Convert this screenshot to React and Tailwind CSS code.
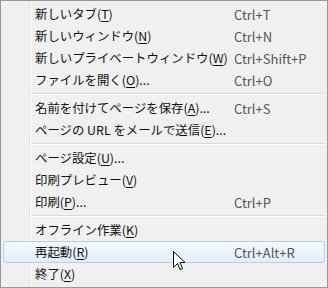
import React from "react";

const groups = [
  [
    { pre: "新しいタブ(", key: "T", post: ")", sc: "Ctrl+T" },
    { pre: "新しいウィンドウ(", key: "N", post: ")", sc: "Ctrl+N" },
    { pre: "新しいプライベートウィンドウ(", key: "W", post: ")", sc: "Ctrl+Shift+P" },
    { pre: "ファイルを開く(", key: "O", post: ")...", sc: "Ctrl+O" },
  ],
  [
    { pre: "名前を付けてページを保存(", key: "A", post: ")...", sc: "Ctrl+S" },
    { pre: "ページの URL をメールで送信(", key: "E", post: ")..." },
  ],
  [
    { pre: "ページ設定(", key: "U", post: ")..." },
    { pre: "印刷プレビュー(", key: "V", post: ")" },
    { pre: "印刷(", key: "P", post: ")...", sc: "Ctrl+P" },
  ],
  [
    { pre: "オフライン作業(", key: "K", post: ")" },
    { pre: "再起動(", key: "R", post: ")", sc: "Ctrl+Alt+R", hot: true },
    { pre: "終了(", key: "X", post: ")" },
  ],
];

function MenuItem({ item }) {
  return (
    <div
      className={
        "flex items-center h-[22px] " +
        (item.hot
          ? "rounded-[3px] border border-[#b4d0f0] bg-gradient-to-b from-[#f4f8fd] to-[#e3edfa] pl-[31px]"
          : "pl-[32px]")
      }
    >
      <span className="w-[199px] whitespace-nowrap text-[#111] text-[12.4px]">
        {item.pre}
        <span className="underline underline-offset-2">{item.key}</span>
        {item.post}
      </span>
      {item.sc && (
        <span className="whitespace-nowrap text-[#555] text-[13px]">{item.sc}</span>
      )}
    </div>
  );
}

function Separator() {
  return (
    <div className="h-[6px] flex flex-col justify-center pl-[28px]">
      <div className="h-px bg-[#dadada]" />
      <div className="h-px bg-white" />
    </div>
  );
}

export default function App() {
  return (
    <div
      className="relative w-[328px] h-[288px] border border-[#979797] bg-[#f0f0f0] p-[2px] leading-none overflow-hidden"
      style={{ fontFamily: '"Noto Sans CJK JP", "Noto Sans", sans-serif' }}
    >
      {/* gutter line */}
      <div className="absolute top-[2px] bottom-[2px] left-[28px] w-[2px] flex">
        <div className="w-px bg-[#e2e3e3]" />
        <div className="w-px bg-white" />
      </div>

      <div className="relative flex flex-col">
        {groups.map((g, gi) => (
          <React.Fragment key={gi}>
            {gi > 0 && <Separator />}
            {g.map((item, i) => (
              <MenuItem key={i} item={item} />
            ))}
          </React.Fragment>
        ))}
      </div>

      {/* mouse pointer */}
      <svg
        className="absolute left-[172px] top-[250px]"
        width="13"
        height="21"
        viewBox="0 0 13 21"
      >
        <path
          d="M0.5 0.5 L0.5 16.5 L4.5 12.5 L7 18.5 L9.5 17.5 L7 11.5 L12 11.5 Z"
          fill="white"
          stroke="black"
          strokeWidth="1"
          strokeLinejoin="miter"
        />
      </svg>
    </div>
  );
}
